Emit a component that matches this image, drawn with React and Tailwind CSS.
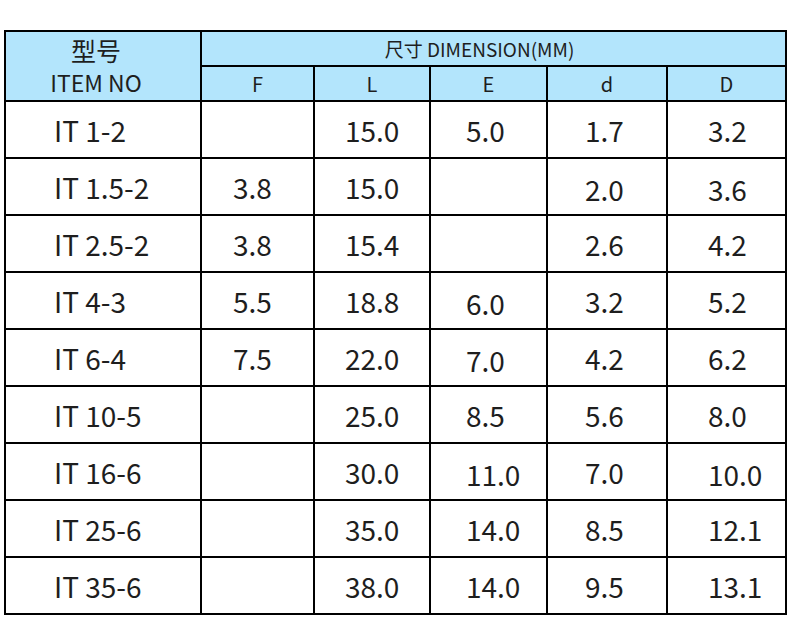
import React from 'react';

const rows = [
  ['IT 1-2', '', '15.0', '5.0', '1.7', '3.2'],
  ['IT 1.5-2', '3.8', '15.0', '', '2.0', '3.6'],
  ['IT 2.5-2', '3.8', '15.4', '', '2.6', '4.2'],
  ['IT 4-3', '5.5', '18.8', '6.0', '3.2', '5.2'],
  ['IT 6-4', '7.5', '22.0', '7.0', '4.2', '6.2'],
  ['IT 10-5', '', '25.0', '8.5', '5.6', '8.0'],
  ['IT 16-6', '', '30.0', '11.0', '7.0', '10.0'],
  ['IT 25-6', '', '35.0', '14.0', '8.5', '12.1'],
  ['IT 35-6', '', '38.0', '14.0', '9.5', '13.1'],
];

// cells that sit a little lower in the original
const low = { '1-4': 1, '1-5': 1, '3-3': 1, '4-3': 1, '6-3': 1, '6-5': 1 };

const pads = ['pl-[48px]', 'pl-[31px]', 'pl-[30px]', 'pl-[35px]', 'pl-[37px]', 'pl-[40px]'];

const App = () => {
  return (
    <div className="w-[790px] h-[641px] bg-white pt-[30px] pl-[4px] text-[#1e1e1e]" style={{ fontFamily: '"Noto Sans CJK SC", "Noto Sans", sans-serif' }}>
      <table className="table-fixed border-collapse w-[781px]">
        <colgroup>
          <col className="w-[196px]" />
          <col className="w-[113px]" />
          <col className="w-[116px]" />
          <col className="w-[117px]" />
          <col className="w-[120px]" />
          <col className="w-[119px]" />
        </colgroup>
        <thead>
          <tr className="h-[35px] bg-[#b3e5fc]">
            <th rowSpan={2} className="border-2 border-black font-normal text-center p-0 pr-[14px]">
              <div className="text-[25px] leading-[30px]">型号</div>
              <div className="text-[23px] leading-[30px] mt-[2px]">ITEM NO</div>
            </th>
            <th colSpan={5} className="border-2 border-black font-normal text-[19px] text-center p-0 pr-[28px] leading-[30px]">
              尺寸 DIMENSION(MM)
            </th>
          </tr>
          <tr className="h-[35px] bg-[#b3e5fc]">
            {['F', 'L', 'E', 'd', 'D'].map((h) => (
              <th key={h} className="border-2 border-black font-normal text-[20px] text-center p-0 leading-[30px]">
                {h}
              </th>
            ))}
          </tr>
        </thead>
        <tbody>
          {rows.map((r, i) => (
            <tr key={i} className="h-[57px]">
              {r.map((c, j) => (
                <td key={j} className={`border-2 border-black p-0 text-[28px] font-normal ${pads[j]}`}>
                  <span className={low[`${i}-${j}`] ? 'relative top-[2px]' : ''}>{c}</span>
                </td>
              ))}
            </tr>
          ))}
        </tbody>
      </table>
    </div>
  );
};

export default App;
